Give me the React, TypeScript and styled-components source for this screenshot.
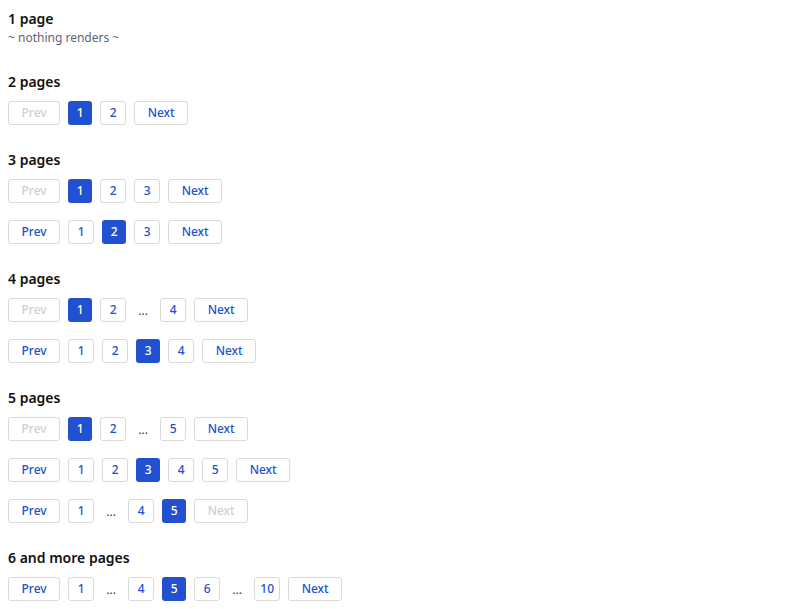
import React from 'react';
import styled, { createGlobalStyle } from 'styled-components';

const GlobalStyle = createGlobalStyle`
    body {
        margin: 9px 8px 8px 8px;
        font-family: "Noto Sans", "Open Sans", sans-serif;
        color: #111;
        background: #fff;
    }
`

const Section = styled.section`
    margin-bottom: 25px;
`

const Heading = styled.h3`
    margin: 0 0 9px 0;
    font-size: 14px;
    line-height: 20px;
    font-weight: 600;
    color: #111;
`

const Note = styled.p`
    margin: -9px 0 0 0;
    font-size: 12px;
    line-height: 18px;
    color: #5f6470;
`

const Rows = styled.div`
    display: flex;
    flex-direction: column;
    gap: 17px;
`

const Row = styled.nav`
    display: flex;
    align-items: center;
    gap: 8px;
`

const PageButton = styled.button<{ $active?: boolean; $wide?: boolean }>`
    box-sizing: border-box;
    height: 24px;
    min-width: ${props => props.$active ? "24px" : "26px"};
    padding: ${props => props.$wide ? "0 12.5px" : "0 5px"};
    border: ${props => props.$active ? "none" : "1px solid #dadada"};
    border-radius: 3px;
    background: ${props => props.$active ? "#2151d1" : "#fff"};
    color: ${props => props.$active ? "#fff" : "#2151d1"};
    font-family: inherit;
    font-size: 12px;
    font-weight: 500;
    line-height: 22px;
    cursor: pointer;

    &:disabled {
        color: #cfcfcf;
        cursor: default;
    }
`

const Dots = styled.span`
    width: 18px;
    text-align: center;
    font-size: 12px;
    color: #444;
`

type Item = number | "gap";

function getItems(total: number, current: number): Item[] {
    const shown: number[] = [];
    for (let p = 1; p <= total; p++) {
        if (p === 1 || p === total || Math.abs(p - current) <= 1) shown.push(p);
    }
    const items: Item[] = [];
    shown.forEach((p, i) => {
        if (i > 0 && p - shown[i - 1] > 1) items.push("gap");
        items.push(p);
    });
    return items;
}

function Pagination({ total, current }: { total: number; current: number }) {
    if (total < 2) return null;
    return (
        <Row>
            <PageButton $wide disabled={current === 1}>Prev</PageButton>
            {
                getItems(total, current).map((item, i) =>
                    item === "gap" ?
                        <Dots key={"gap" + i}>...</Dots>
                        :
                        <PageButton key={item} $active={item === current}>{item}</PageButton>
                )
            }
            <PageButton $wide disabled={current === total}>Next</PageButton>
        </Row>
    );
}

const examples: { title: string; total: number; currents: number[] }[] = [
    { title: "2 pages", total: 2, currents: [1] },
    { title: "3 pages", total: 3, currents: [1, 2] },
    { title: "4 pages", total: 4, currents: [1, 3] },
    { title: "5 pages", total: 5, currents: [1, 3, 5] },
    { title: "6 and more pages", total: 10, currents: [5] },
];

function App() {
    return (
        <>
            <GlobalStyle />
            <Section>
                <Heading>1 page</Heading>
                <Note>~ nothing renders ~</Note>
                <Pagination total={1} current={1} />
            </Section>
            {
                examples.map(ex => (
                    <Section key={ex.title}>
                        <Heading>{ex.title}</Heading>
                        <Rows>
                            {ex.currents.map(c => <Pagination key={c} total={ex.total} current={c} />)}
                        </Rows>
                    </Section>
                ))
            }
        </>
    );
}

export default App;
